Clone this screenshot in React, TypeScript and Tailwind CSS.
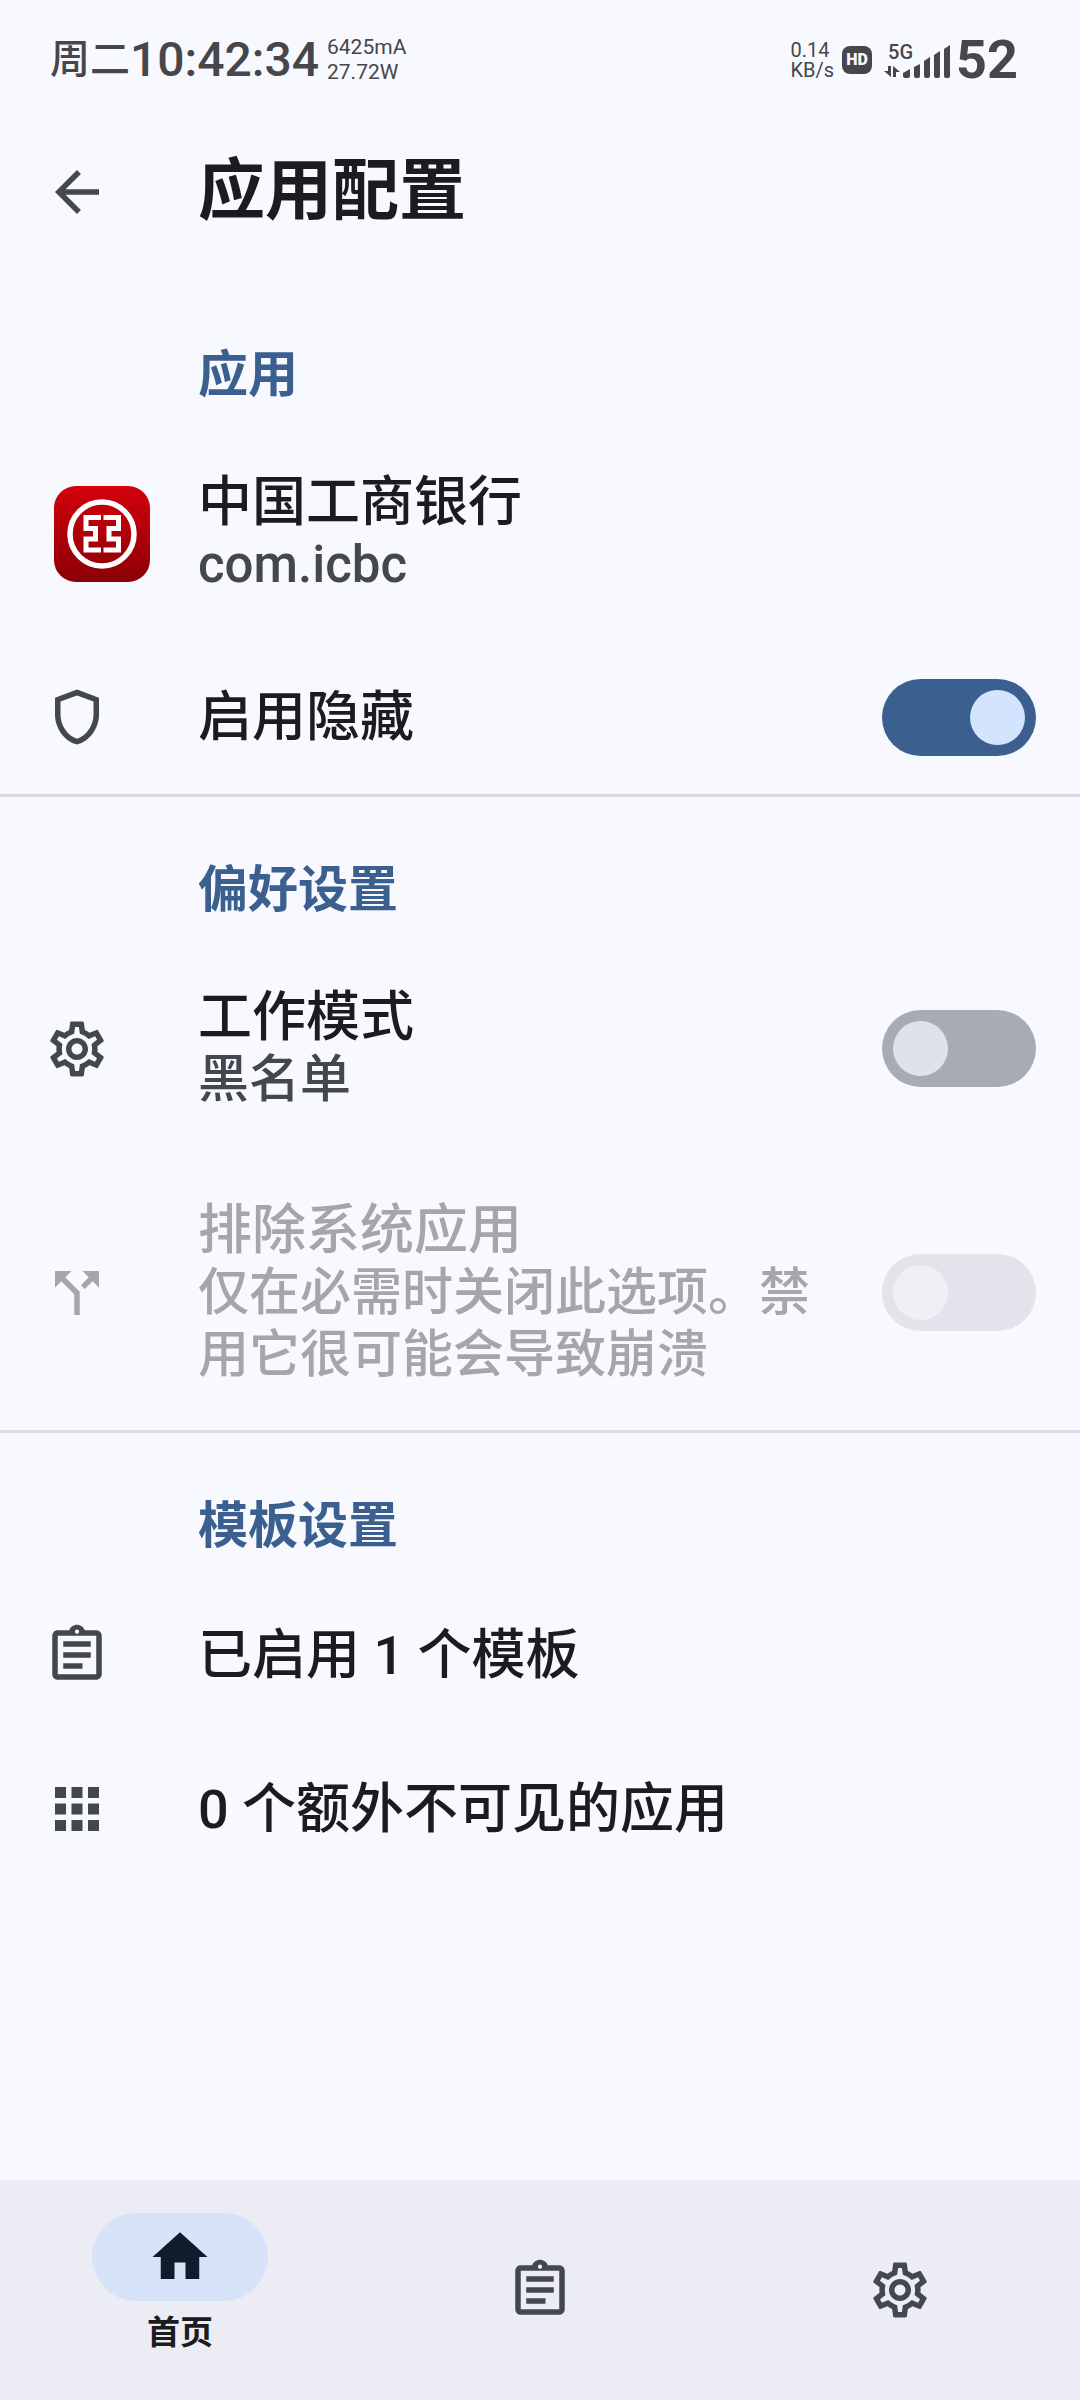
import { useState } from "react";
import type { ReactNode } from "react";
import {
  MdApps,
  MdArrowBack,
  MdCallSplit,
  MdHome,
  MdOutlineAssignment,
  MdOutlineSettings,
  MdOutlineShield,
} from "react-icons/md";

const navItems = [
  { id: "home", label: "首页", icon: MdHome },
  { id: "templates", label: "模板", icon: MdOutlineAssignment },
  { id: "settings", label: "设置", icon: MdOutlineSettings },
];

function StatusBar() {
  return (
    <div className="flex h-[120px] items-center justify-between pl-[50px] pr-[62px] text-[#46464b]">
      <div className="flex items-center">
        <span className="text-[40px] font-medium leading-none">周二</span>
        <span className="text-[48px] font-medium leading-none">10:42:34</span>
        <div className="ml-2 flex flex-col text-[21px] leading-[25px]">
          <span>6425mA</span>
          <span>27.72W</span>
        </div>
      </div>
      <div className="flex items-center">
        <div className="flex flex-col text-[20px] leading-[20px]">
          <span>0.14</span>
          <span>KB/s</span>
        </div>
        <span className="ml-2 flex h-7 w-[30px] items-center justify-center rounded-lg bg-[#46464b] text-base font-black leading-none text-[#f8f9ff]">
          HD
        </span>
        <div className="relative ml-3 h-9 w-[68px]">
          <span className="absolute left-1 top-0 text-[20px] font-medium leading-[20px]">5G</span>
          <svg viewBox="0 0 68 36" className="h-9 w-[68px]" fill="currentColor">
            <path d="M7 24v11L0 29h4v-5zM9 35V24l7 6h-4v5z" />
            <path d="M19 31l7-4v7q0 2-2 2h-3q-2 0-2-2zM30 25l6-3v12q0 2-2 2h-2q-2 0-2-2zM40 19l6-4v19q0 2-2 2h-2q-2 0-2-2zM50 13l6-4v25q0 2-2 2h-2q-2 0-2-2zM60 7l6-4v31q0 2-2 2h-2q-2 0-2-2z" />
          </svg>
        </div>
        <span className="ml-1 text-[54px] font-bold leading-none">52</span>
      </div>
    </div>
  );
}

function BankLogo() {
  return (
    <svg viewBox="0 0 96 96" className="ml-[10px] size-24" aria-hidden="true">
      <defs>
        <linearGradient id="bankRed" x1="0" y1="0" x2="0" y2="1">
          <stop offset="0" stopColor="#d3000b" />
          <stop offset="1" stopColor="#8b0007" />
        </linearGradient>
      </defs>
      <rect width="96" height="96" rx="22" fill="url(#bankRed)" />
      <circle cx="48" cy="48" r="32" fill="none" stroke="#fff" strokeWidth="5.5" />
      <g fill="none" stroke="#fff" strokeWidth="5">
        <path d="M47 31.500H32V42.500H41.500V53H32V64H47" />
        <path d="M49.500 31.500H64.500V42.500H55V53H64.500V64H49.500" />
      </g>
    </svg>
  );
}

function Switch({
  label,
  checked,
  disabled,
  onChange,
}: {
  label: string;
  checked: boolean;
  disabled?: boolean;
  onChange?: (value: boolean) => void;
}) {
  return (
    <label className="relative block h-[77px] w-[154px] shrink-0">
      <input
        type="checkbox"
        role="switch"
        aria-label={label}
        checked={checked}
        disabled={disabled}
        onChange={(e) => onChange?.(e.target.checked)}
        className="peer size-full appearance-none rounded-full bg-[#a9abb4] checked:bg-[#3b608f] disabled:bg-[#e2e3eb]"
      />
      <span className="pointer-events-none absolute left-[11px] top-[11px] size-[55px] rounded-full bg-[#dfe2eb] peer-checked:left-[88px] peer-checked:bg-[#d3e4ff] peer-disabled:bg-[#eff0f5]" />
    </label>
  );
}

function SectionTitle({ children }: { children: ReactNode }) {
  return (
    <h2 className="flex h-[145px] items-center pl-[198px] pt-10 text-[50px] font-bold leading-none text-[#3b608f]">
      {children}
    </h2>
  );
}

function Row({
  icon,
  title,
  summary,
  trailing,
  disabled,
}: {
  icon: ReactNode;
  title: string;
  summary?: string;
  trailing?: ReactNode;
  disabled?: boolean;
}) {
  return (
    <div
      className={`flex min-h-[154px] items-center pl-11 pr-11 ${summary ? "py-11" : ""} ${
        disabled ? "text-[#a5a6ab]" : "text-[#44474e]"
      }`}
    >
      <div className="w-[154px] shrink-0">{icon}</div>
      <div className="flex-1">
        <div
          className={`text-[54px] font-medium leading-[63px] ${
            disabled ? "text-[#a5a6ab]" : "text-[#1a1c20]"
          }`}
        >
          {title}
        </div>
        {summary && <div className="text-[51px] font-medium leading-[62px]">{summary}</div>}
      </div>
      {trailing && <div className="ml-11">{trailing}</div>}
    </div>
  );
}

export default function App() {
  const [hidden, setHidden] = useState(true);
  const [whitelist, setWhitelist] = useState(false);
  const [tab, setTab] = useState("home");

  return (
    <div className="flex min-h-screen flex-col bg-[#f8f9ff] font-[Roboto,'Noto_Sans_CJK_SC',sans-serif]">
      <StatusBar />

      <header className="flex h-[162px] items-start pl-11 pt-[39px]">
        <button type="button" aria-label="返回" className="w-[154px] text-[#44474e]">
          <MdArrowBack className="size-[66px]" />
        </button>
        <h1 className="text-[67px] font-bold leading-[64px] text-[#1a1c20]">应用配置</h1>
      </header>

      <main className="flex-1">
        <section className="border-b-[3px] border-[#dadae1]">
          <SectionTitle>应用</SectionTitle>
          <Row icon={<BankLogo />} title="中国工商银行" summary="com.icbc" />
          <Row
            icon={<MdOutlineShield className="size-[66px]" />}
            title="启用隐藏"
            trailing={<Switch label="启用隐藏" checked={hidden} onChange={setHidden} />}
          />
        </section>

        <section className="border-b-[3px] border-[#dadae1]">
          <SectionTitle>偏好设置</SectionTitle>
          <Row
            icon={<MdOutlineSettings className="size-[66px]" />}
            title="工作模式"
            summary="黑名单"
            trailing={<Switch label="工作模式" checked={whitelist} onChange={setWhitelist} />}
          />
          <Row
            icon={<MdCallSplit className="size-[66px]" />}
            title="排除系统应用"
            summary="仅在必需时关闭此选项。禁用它很可能会导致崩溃"
            disabled
            trailing={<Switch label="排除系统应用" checked={false} disabled />}
          />
        </section>

        <section>
          <SectionTitle>模板设置</SectionTitle>
          <Row icon={<MdOutlineAssignment className="size-[66px]" />} title="已启用 1 个模板" />
          <Row icon={<MdApps className="size-[66px]" />} title="0 个额外不可见的应用" />
        </section>
      </main>

      <nav className="flex h-[220px] bg-[#ecedf4]">
        {navItems.map((item) => {
          const Icon = item.icon;
          const active = tab === item.id;
          return (
            <button
              key={item.id}
              type="button"
              aria-label={item.label}
              onClick={() => setTab(item.id)}
              className={`flex flex-1 flex-col items-center justify-center gap-[10px] ${active ? "pb-3" : ""}`}
            >
              <span
                className={`flex h-[88px] w-[176px] items-center justify-center rounded-full ${
                  active ? "bg-[#d6e3f8] text-[#0f1c2b]" : "text-[#44474e]"
                }`}
              >
                <Icon className="size-[66px]" />
              </span>
              {active && (
                <span className="text-[33px] font-bold leading-[44px] text-[#1a1c20]">{item.label}</span>
              )}
            </button>
          );
        })}
      </nav>
    </div>
  );
}
